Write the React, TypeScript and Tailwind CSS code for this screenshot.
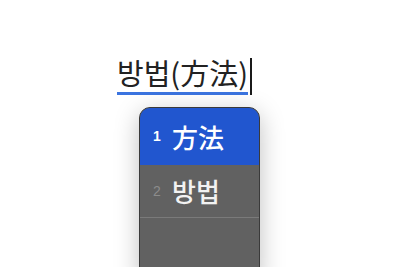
export default function App() {
  return (
    <div
      className="relative h-[267px] w-[400px] overflow-hidden bg-white"
      style={{ fontFamily: '"Noto Sans CJK KR", "Noto Sans", sans-serif' }}
    >
      <div className="pl-[117px] pt-[52px]">
        <div className="flex items-end">
          <span className="border-b-[3px] border-[#3b74e0] text-[29px] font-normal leading-[40px] text-[#222222]">
            방법(方法)
          </span>
          <span className="ml-[2px] h-[37px] w-[2px] bg-[#1a1a1a]" />
        </div>
      </div>
      <div className="absolute left-[139px] top-[107px] w-[121px] overflow-hidden rounded-t-[11px] border border-[#3a3a3a] bg-[#616161] shadow-[0_6px_24px_rgba(0,0,0,0.25)]">
        <div className="flex h-[57px] items-center bg-[#2156cf] pl-[13px]">
          <span className="w-[19px] text-[14px] font-bold text-white" style={{ fontFamily: '"Liberation Sans", sans-serif' }}>1</span>
          <span className="text-[26px] font-medium leading-none text-white">方法</span>
        </div>
        <div className="flex h-[53px] items-center border-b border-[#7a7a7a] pl-[13px]">
          <span className="w-[19px] text-[14px] text-[#8c8c8c]" style={{ fontFamily: '"Liberation Sans", sans-serif' }}>2</span>
          <span className="text-[26px] font-medium leading-none text-[#f2f2f2]">방법</span>
        </div>
        <div className="h-[60px]" />
      </div>
    </div>
  );
}
